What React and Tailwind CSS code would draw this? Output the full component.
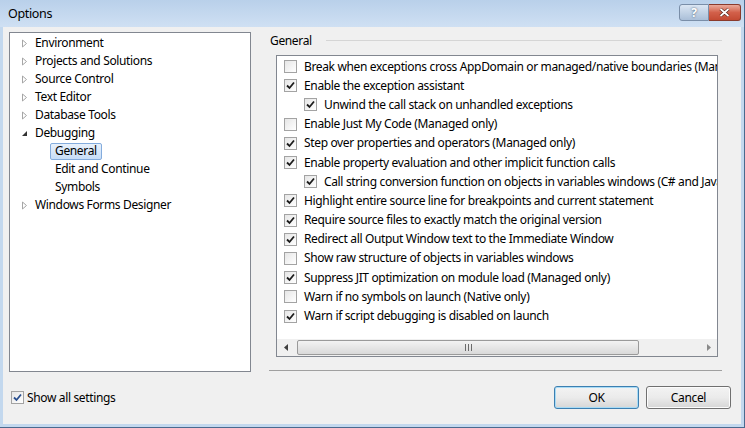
import React from 'react';

const treeItems = [
  { label: 'Environment', level: 0, arrow: 'closed' },
  { label: 'Projects and Solutions', level: 0, arrow: 'closed' },
  { label: 'Source Control', level: 0, arrow: 'closed' },
  { label: 'Text Editor', level: 0, arrow: 'closed' },
  { label: 'Database Tools', level: 0, arrow: 'closed' },
  { label: 'Debugging', level: 0, arrow: 'open' },
  { label: 'General', level: 1, selected: true },
  { label: 'Edit and Continue', level: 1 },
  { label: 'Symbols', level: 1 },
  { label: 'Windows Forms Designer', level: 0, arrow: 'closed' },
];

const options = [
  { label: 'Break when exceptions cross AppDomain or managed/native boundaries (Managed only)', checked: false },
  { label: 'Enable the exception assistant', checked: true },
  { label: 'Unwind the call stack on unhandled exceptions', checked: true, sub: true },
  { label: 'Enable Just My Code (Managed only)', checked: false },
  { label: 'Step over properties and operators (Managed only)', checked: true },
  { label: 'Enable property evaluation and other implicit function calls', checked: true },
  { label: 'Call string conversion function on objects in variables windows (C# and JavaScript only)', checked: true, sub: true },
  { label: 'Highlight entire source line for breakpoints and current statement', checked: true },
  { label: 'Require source files to exactly match the original version', checked: true },
  { label: 'Redirect all Output Window text to the Immediate Window', checked: true },
  { label: 'Show raw structure of objects in variables windows', checked: false },
  { label: 'Suppress JIT optimization on module load (Managed only)', checked: true },
  { label: 'Warn if no symbols on launch (Native only)', checked: false },
  { label: 'Warn if script debugging is disabled on launch', checked: true },
];

const CheckBox = ({ checked, blue = false }) => (
  <div className="w-[13px] h-[13px] shrink-0 border border-[#a3a3a3] bg-gradient-to-br from-[#e6e6e6] to-white flex items-center justify-center">
    {checked && (
      <svg width="9" height="9" viewBox="0 0 9 9">
        <path d="M1 4.5 L3.5 7 L8 1.5" fill="none" stroke={blue ? '#2a4f8f' : '#1c1c1c'} strokeWidth="1.8" />
      </svg>
    )}
  </div>
);

const Arrow = ({ type }) =>
  type === 'open' ? (
    <svg width="7" height="7" viewBox="0 0 7 7">
      <path d="M6 1 L6 6 L1 6 Z" fill="#333" />
    </svg>
  ) : (
    <svg width="7" height="9" viewBox="0 0 7 9">
      <path d="M1.5 1 L5.5 4.5 L1.5 8 Z" fill="none" stroke="#a6a6a6" strokeWidth="1" />
    </svg>
  );

const Button = ({ children, focused }) => (
  <button
    className={`w-[85px] h-[23px] rounded-[3px] border text-[12px] text-black bg-gradient-to-b from-[#f3f3f3] via-[#ebebeb] to-[#d6d6d6] ${
      focused ? 'border-[#3c7fb1] shadow-[inset_0_0_0_1px_#a8dbf5]' : 'border-[#707070] shadow-[inset_0_0_0_1px_#fcfcfc]'
    }`}
  >
    {children}
  </button>
);

export default function App() {
  return (
    <div
      className="w-[745px] h-[428px] flex flex-col bg-[#c3d8ee] border-r border-b border-[#4a6a8e] overflow-hidden text-black tracking-[-0.35px]"
      style={{ fontFamily: '"Noto Sans", "Open Sans", sans-serif' }}
    >
      {/* Title bar */}
      <div className="h-[27px] shrink-0 flex items-start bg-gradient-to-b from-[#b9d0ea] to-[#cfe0f3]">
        <div className="pl-[8px] pt-[5px] text-[12.5px]">Options</div>
        <div className="ml-auto flex pt-[4px] pr-[3px]">
          <div className="w-[30px] h-[17px] rounded-l-[3px] border border-[#7a8ea8] bg-gradient-to-b from-[#dbe6f3] to-[#aabfd8] flex items-center justify-center text-[12px] font-bold text-white [text-shadow:0_0_2px_#34495f]">
            ?
          </div>
          <div className="w-[32px] h-[17px] rounded-r-[3px] border border-l-0 border-[#8a3a2c] bg-gradient-to-b from-[#e9a99a] via-[#d2604a] to-[#c34a33] flex items-center justify-center">
            <svg width="11" height="9" viewBox="0 0 11 9">
              <path d="M1.5 1 L9.5 8 M9.5 1 L1.5 8" stroke="#4a1b12" strokeWidth="3" />
              <path d="M1.5 1 L9.5 8 M9.5 1 L1.5 8" stroke="#fff" strokeWidth="1.8" />
            </svg>
          </div>
        </div>
      </div>

      {/* Body */}
      <div className="flex-1 ml-[3px] mr-[3px] mb-[3px] bg-[#f0f0f0] flex flex-col">
        <div className="flex pt-[5px] pl-[6px]">
          {/* Tree */}
          <div className="w-[242px] h-[340px] border border-[#828790] bg-white pt-[1px] text-[12px]">
            {treeItems.map((it) => (
              <div key={it.label} className="h-[18px] flex items-center">
                {it.level === 0 ? (
                  <>
                    <div className="w-[7px] ml-[11px] flex items-center justify-center">
                      <Arrow type={it.arrow} />
                    </div>
                    <span className="ml-[7px]">{it.label}</span>
                  </>
                ) : (
                  <span
                    className={`ml-[40px] px-[4px] h-[17px] flex items-center rounded-[2px] border ${
                      it.selected ? 'border-[#84acdd] bg-gradient-to-b from-[#e8f1fc] to-[#c7ddf7]' : 'border-transparent'
                    }`}
                  >
                    {it.label}
                  </span>
                )}
              </div>
            ))}
          </div>

          {/* Right side */}
          <div className="ml-[18px] w-[453px] flex flex-col">
            <div className="h-[17px] flex items-center text-[12px]">
              <span className="ml-[1px]">General</span>
              <div className="flex-1 ml-[14px] h-px bg-[#d5d5d5]" />
            </div>
            <div className="ml-[7px] mt-[6px] w-[442px] h-[302px] border border-[#828790] bg-white flex flex-col overflow-hidden">
              <div className="flex-1 pt-[1px] text-[12px] overflow-hidden">
                {options.map((o) => (
                  <div key={o.label} className={`h-[19.2px] flex items-center whitespace-nowrap ${o.sub ? 'pl-[27px]' : 'pl-[7px]'}`}>
                    <CheckBox checked={o.checked} />
                    <span className="ml-[7px]">{o.label}</span>
                  </div>
                ))}
              </div>
              {/* horizontal scrollbar */}
              <div className="h-[17px] shrink-0 flex bg-[#f0f0f0]">
                <div className="w-[17px] flex items-center justify-center">
                  <svg width="4" height="7" viewBox="0 0 4 7">
                    <path d="M4 0 L0 3.5 L4 7 Z" fill="#404040" />
                  </svg>
                </div>
                <div className="ml-[3px] w-[342px] my-[1px] rounded-[2px] border border-[#9a9a9a] bg-gradient-to-b from-[#f3f3f3] to-[#d9d9d9] flex items-center justify-center">
                  <div className="flex gap-[2px]">
                    <div className="w-px h-[7px] bg-[#6b6b6b]" />
                    <div className="w-px h-[7px] bg-[#6b6b6b]" />
                    <div className="w-px h-[7px] bg-[#6b6b6b]" />
                  </div>
                </div>
                <div className="ml-auto w-[17px] flex items-center justify-center">
                  <svg width="4" height="7" viewBox="0 0 4 7">
                    <path d="M0 0 L4 3.5 L0 7 Z" fill="#8a8a8a" />
                  </svg>
                </div>
              </div>
            </div>
            <div className="mt-[13px] h-px bg-[#a0a0a0]" />
          </div>
        </div>

        {/* Bottom row */}
        <div className="mt-[14px] flex items-center pl-[8px] pr-[10px]">
          <CheckBox checked blue />
          <span className="ml-[3px] text-[12px]">Show all settings</span>
          <div className="ml-auto flex gap-[7px]">
            <Button focused>OK</Button>
            <Button>Cancel</Button>
          </div>
        </div>
      </div>
    </div>
  );
}
